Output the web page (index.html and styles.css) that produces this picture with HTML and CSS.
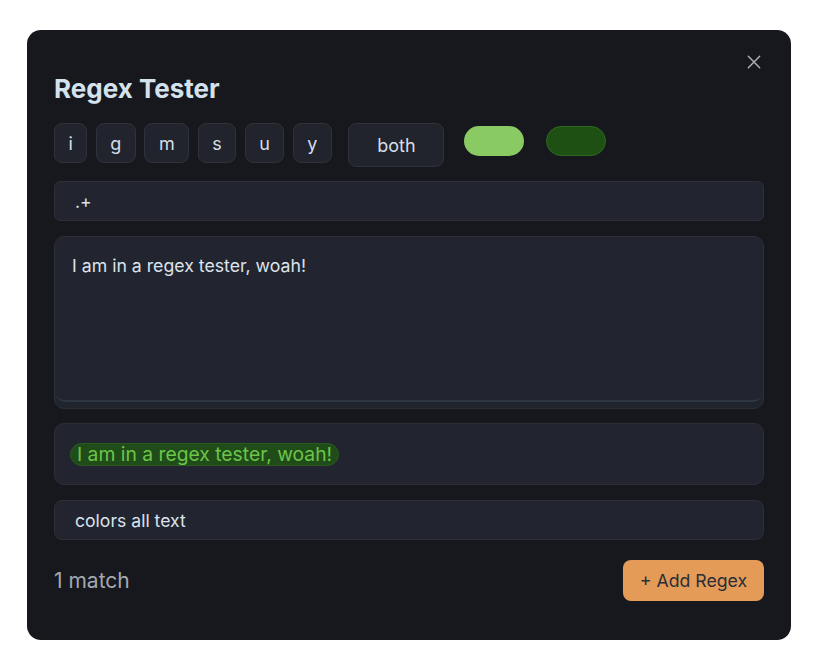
FILE: index.html
```html
<!DOCTYPE html>
<html>
<head>
<meta charset="utf-8">
<link rel="stylesheet" href="styles.css">
</head>
<body>
<div class="modal">
  <button class="close" aria-label="Close">
    <svg width="16" height="16" viewBox="0 0 16 16"><path d="M1.5 1.5 L14.5 14.5 M14.5 1.5 L1.5 14.5" stroke="#aeb4bc" stroke-width="1.6" stroke-linecap="round" fill="none"/></svg>
  </button>
  <h1 class="title">Regex Tester</h1>
  <div class="flags">
    <button class="flag">i</button>
    <button class="flag">g</button>
    <button class="flag">m</button>
    <button class="flag">s</button>
    <button class="flag">u</button>
    <button class="flag">y</button>
    <button class="mode">both</button>
    <span class="pill pill-light"></span>
    <span class="pill pill-dark"></span>
  </div>
  <div class="field regex">.+</div>
  <div class="textwrap">
    <div class="textarea">I am in a regex tester, woah!</div>
  </div>
  <div class="output"><span class="match">I am in a regex tester, woah!</span></div>
  <div class="field desc">colors all text</div>
  <div class="footer">
    <span class="count">1 match</span>
    <button class="add">+ Add Regex</button>
  </div>
</div>
</body>
</html>
```

FILE: styles.css
```css
* { box-sizing: border-box; }
html, body { margin: 0; padding: 0; background: #ffffff; }
body {
  font-family: Inter, "Noto Sans", sans-serif;
  padding: 30px 30px 28px 27px;
}
.modal {
  position: relative;
  width: 764px;
  height: 610px;
  background: #17181d;
  border-radius: 14px;
  padding: 43px 27px 0 27px;
  display: flex;
  flex-direction: column;
}
.close {
  position: absolute;
  top: 24px;
  right: 29px;
  width: 16px;
  height: 16px;
  padding: 1px;
  border: none;
  background: transparent;
  display: flex;
}
.close svg { width: 14px; height: 14px; }
.title {
  margin: 0;
  font-size: 26px;
  line-height: 32px;
  font-weight: 700;
  color: #d4e2ee;
  letter-spacing: 0;
}
.flags {
  margin-top: 18px;
  display: flex;
  align-items: flex-start;
}
.flag, .mode {
  font-family: inherit;
  font-size: 18px;
  color: #d6dfe8;
  background: #22242d;
  border: 1px solid #2f323c;
  border-radius: 8px;
  height: 40px;
  padding: 0 13.5px;
  margin-right: 8.5px;
  display: flex;
  align-items: center;
  justify-content: center;
}
.mode {
  height: 44px;
  width: 96px;
  margin-left: 8px;
  margin-right: 20px;
}
.pill {
  margin-top: 3px;
  width: 60px;
  height: 30px;
  border-radius: 15px;
}
.pill-light { background: #8aca62; margin-right: 22px; }
.pill-dark { background: #1e5014; border: 1px solid #2c6a20; }
.field {
  height: 40px;
  background: #22242f;
  border: 1px solid #2c2f3a;
  border-radius: 6px;
  display: flex;
  align-items: center;
  padding-left: 20px;
  font-size: 17.6px;
  color: #dbe3ec;
}
.regex { margin-top: 14px; }
.textwrap {
  margin-top: 15px;
  height: 173px;
  background: #20242c;
  border: 1px solid #2b2f3a;
  border-radius: 10px;
  padding-bottom: 6px;
}
.textarea {
  height: 100%;
  background: #22242f;
  border-bottom: 2px solid #2c3742;
  border-radius: 10px;
  padding: 16px 17px;
  font-size: 17.7px;
  line-height: 26px;
  color: #dbe3ec;
}
.output {
  margin-top: 14px;
  height: 62px;
  background: #22242f;
  border: 1px solid #2c2f3a;
  border-radius: 10px;
  padding: 0 15px;
  display: flex;
  align-items: center;
}
.match {
  background: #204c19;
  border: 1px solid #2a5a20;
  color: #6cc449;
  font-size: 19.3px;
  line-height: 21px;
  padding: 0 6px;
  border-radius: 12px;
}
.desc { margin-top: 15px; border-radius: 8px; }
.footer {
  margin-top: 20px;
  display: flex;
  align-items: center;
  justify-content: space-between;
}
.count {
  font-size: 21px;
  color: #a4a8af;
}
.add {
  font-family: inherit;
  font-size: 17.7px;
  color: #2a2e38;
  background: #e49b58;
  border: none;
  border-radius: 8px;
  height: 41px;
  width: 141px;
  display: flex;
  align-items: center;
  justify-content: center;
}
```
